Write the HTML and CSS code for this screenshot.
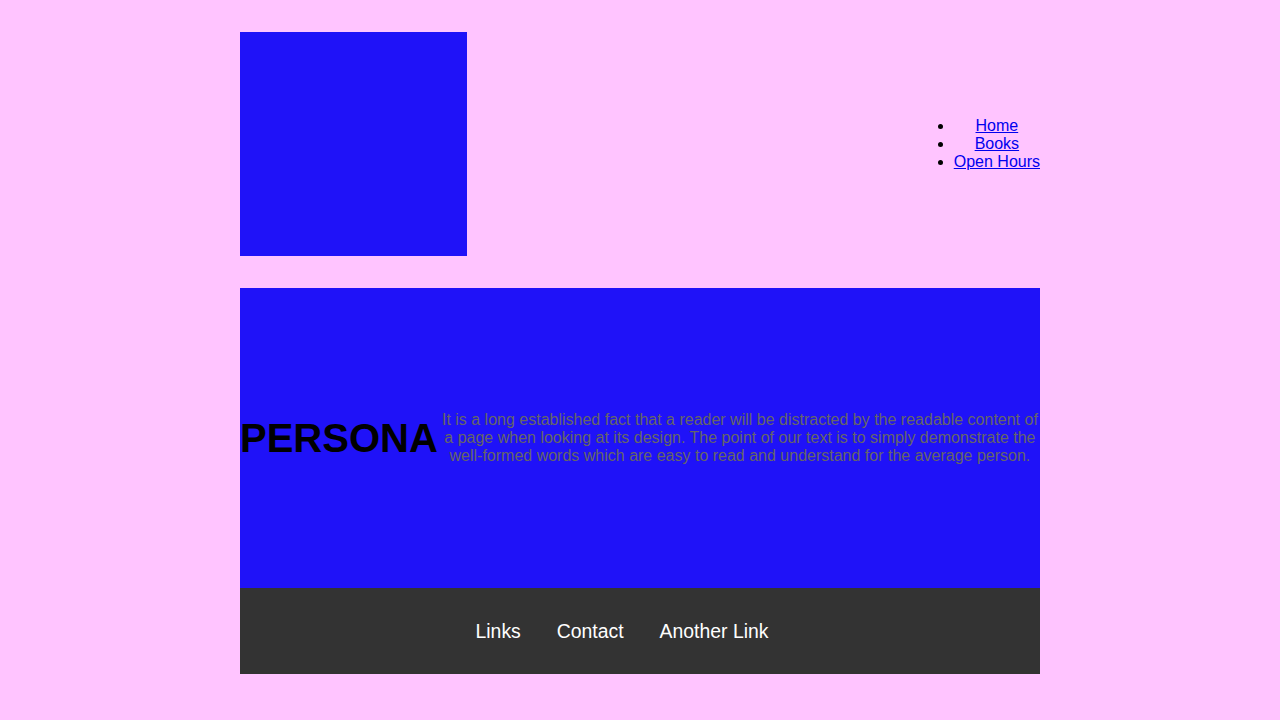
FILE: index.html
```html
<!DOCTYPE html>
<html>
<head>
<meta charset="utf-8">
<link rel="stylesheet" href="styles.css">
</head>
<body>
<div class="page">
  <header class="header">
    <div class="logo"></div>
    <nav class="nav">
      <ul>
        <li><a href="#">Home</a></li>
        <li><a href="#">Books</a></li>
        <li><a href="#">Open Hours</a></li>
      </ul>
    </nav>
  </header>
  <main class="hero">
    <h1 class="title">PERSONA</h1>
    <p class="text">It is a long established fact that a reader will be distracted by the readable content of a page when looking at its design. The point of our text is to simply demonstrate the well-formed words which are easy to read and understand for the average person.</p>
  </main>
  <footer class="footer">
    <ul>
      <li><a href="#">Links</a></li>
      <li><a href="#">Contact</a></li>
      <li><a href="#">Another Link</a></li>
    </ul>
  </footer>
</div>
</body>
</html>
```
FILE: styles.css
```css
html, body {
  margin: 0;
  padding: 0;
  background: #ffc4ff;
  font-family: "Liberation Sans", Arial, sans-serif;
  font-size: 16px;
  line-height: 18px;
}
.page {
  width: 800px;
  margin: 0 auto;
  padding-top: 32px;
}
.header {
  display: flex;
  justify-content: space-between;
  align-items: center;
  height: 224px;
}
.logo {
  width: 227px;
  height: 224px;
  background: #1f12f8;
}
.nav ul {
  margin: 0;
  padding-left: 40px;
  text-align: center;
}
.nav a {
  color: #0000ee;
}
.hero {
  margin-top: 32px;
  height: 300px;
  background: #1f12f8;
  display: flex;
  align-items: center;
}
.title {
  margin: 0;
  font-size: 40px;
  line-height: 46px;
  font-weight: bold;
  color: #000;
}
.text {
  flex: 1;
  margin: 0 0 0 2px;
  text-align: center;
  color: #666;
}
.footer {
  background: #333;
  height: 86px;
  display: flex;
  align-items: center;
  justify-content: center;
}
.footer ul {
  list-style: none;
  margin: 0;
  padding: 0;
  display: flex;
}
.footer li {
  margin-right: 36px;
}
.footer a {
  color: #fff;
  text-decoration: none;
  font-size: 19.4px;
  line-height: 22px;
}
```
